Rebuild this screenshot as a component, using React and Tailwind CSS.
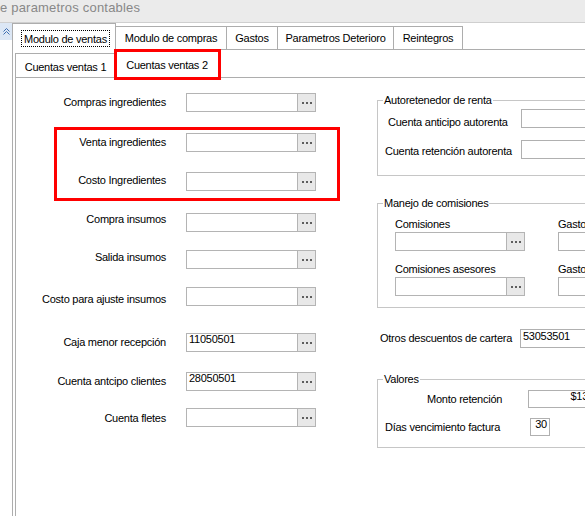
import React from "react";

function Dots() {
  return (
    <div className="flex items-center gap-[2px]">
      <span className="block h-[2px] w-[2px] bg-[#5e5e5e]" />
      <span className="block h-[2px] w-[2px] bg-[#5e5e5e]" />
      <span className="block h-[2px] w-[2px] bg-[#5e5e5e]" />
    </div>
  );
}

function LookupField({ value }) {
  return (
    <div className="flex h-[19px] w-[130px] shrink-0">
      <div className="w-[112px] border border-[#b4b4b4] bg-white pl-[2px] leading-[10px]">{value}</div>
      <div className="flex w-[18px] items-center justify-center border border-l-0 border-[#b4b4b4] bg-[#e8e8e8]">
        <Dots />
      </div>
    </div>
  );
}

const leftRows = [
  { label: "Compras ingredientes", mt: "mt-[15px]", lt: "mt-[3px]" },
  { label: "Venta ingredientes", mt: "mt-[21px]", lt: "mt-[3px]" },
  { label: "Costo Ingredientes", mt: "mt-[20px]", lt: "mt-[2px]" },
  { label: "Compra insumos", mt: "mt-[22px]", lt: "mt-0" },
  { label: "Salida insumos", mt: "mt-[18px]", lt: "mt-[1px]" },
  { label: "Costo para ajuste insumos", mt: "mt-[18px]", lt: "mt-[6px]" },
  { label: "Caja menor recepción", value: "11050501", mt: "mt-[27px]", lt: "mt-[3px]" },
  { label: "Cuenta antcipo clientes", value: "28050501", mt: "mt-[20px]", lt: "mt-[3px]" },
  { label: "Cuenta fletes", mt: "mt-[17px]", lt: "mt-[4px]" },
];

const outerTabs = [
  { label: "Modulo de compras", w: "w-[111px]" },
  { label: "Gastos", w: "w-[51px]" },
  { label: "Parametros Deterioro", w: "w-[116px]" },
  { label: "Reintegros", w: "w-[69px]" },
];

function PlainInput({ value, className }) {
  return (
    <div className={"shrink-0 border border-[#b0b0b0] bg-white px-[2px] " + className}>
      {value}
    </div>
  );
}

export default function App() {
  return (
    <div className="relative h-[516px] w-[585px] overflow-hidden bg-white font-['Liberation_Sans',Arial,sans-serif] text-[11px] leading-[13px] tracking-[-0.25px] text-black">
      {/* window caption */}
      <div className="h-[23px] border-b border-[#cfcfcf] bg-[#ebebeb] text-[13px] leading-[16px] tracking-[0.2px] text-[#888888]">
        e parametros contables
      </div>

      <div className="flex h-[493px]">
        {/* collapsed side panel */}
        <div className="w-[12px] shrink-0">
          <div className="flex h-[17px] items-start justify-center bg-[#dce7f5] pt-[5px]">
            <svg width="7" height="7" viewBox="0 0 7 7" fill="none" stroke="#3d6db0" strokeWidth="1">
              <path d="M0.5 3.5 L3.5 0.5 L6.5 3.5" />
              <path d="M0.5 6.5 L3.5 3.5 L6.5 6.5" />
            </svg>
          </div>
        </div>

        {/* outer tab control */}
        <div className="flex min-w-0 flex-1 flex-col">
          <div className="flex h-[27px] shrink-0 items-end">
            <div className="h-[27px] w-[104px] shrink-0 border-l border-r border-t border-[#adadad] bg-white">
              <div className="ml-[8px] mt-[6px] flex h-[17px] w-[89px] items-center justify-center border border-dotted border-black pt-[1px]">
                Modulo de ventas
              </div>
            </div>
            {outerTabs.map((t) => (
              <div
                key={t.label}
                className={"flex h-[24px] shrink-0 items-center justify-center border-b border-r border-t border-[#adadad] bg-white pt-[1px] " + t.w}
              >
                {t.label}
              </div>
            ))}
            <div className="h-[24px] flex-1 border-b border-[#adadad]" />
          </div>

          <div className="flex min-h-0 flex-1 flex-col border-l border-[#adadad] pl-[2px]">
            {/* inner tab control */}
            <div className="flex h-[28px] shrink-0 items-end">
              <div className="flex h-[25px] w-[100px] shrink-0 items-center justify-center border-b border-l border-t border-[#adadad] pt-[3px]">
                Cuentas ventas 1
              </div>
              <div className="flex h-[28px] w-[104px] shrink-0 items-center justify-center border-l border-r border-t border-[#adadad] bg-white pt-[2px]">
                Cuentas ventas 2
              </div>
              <div className="h-[25px] flex-1 border-b border-[#adadad]" />
            </div>

            <div className="flex min-h-0 flex-1 border-l border-[#adadad]">
              {/* account lookups */}
              <div className="flex w-[300px] shrink-0 flex-col">
                {leftRows.map((r) => (
                  <div key={r.label} className={"flex h-[19px] items-start " + r.mt}>
                    <span className={"w-[150px] shrink-0 text-right " + r.lt}>{r.label}</span>
                    <span className="w-[20px] shrink-0" />
                    <LookupField value={r.value} />
                  </div>
                ))}
              </div>

              {/* right side groups */}
              <div className="ml-[61px] flex w-[260px] shrink-0 flex-col">
                <fieldset className="mt-[16px] border border-[#c6c6c6] pb-[16px]">
                  <legend className="ml-[5px] px-[1px] leading-[13px]">Autoretenedor de renta</legend>
                  <div className="mt-[2px] flex h-[19px] items-start">
                    <span className="ml-[10px] mt-[7px] w-[133px] shrink-0">Cuenta anticipo autorenta</span>
                    <PlainInput className="h-[19px] w-[110px]" />
                  </div>
                  <div className="mt-[12px] flex h-[19px] items-start">
                    <span className="ml-[7px] mt-[5px] w-[136px] shrink-0">Cuenta retención autorenta</span>
                    <PlainInput className="h-[19px] w-[110px]" />
                  </div>
                </fieldset>

                <fieldset className="mt-[21px] border border-[#c6c6c6] pb-[11px]">
                  <legend className="ml-[5px] px-[1px] leading-[13px]">Manejo de comisiones</legend>
                  <div className="flex pl-[17px]">
                    <div className="flex w-[130px] shrink-0 flex-col">
                      <span className="mt-[8px]">Comisiones</span>
                      <div className="mt-[1px]">
                        <LookupField />
                      </div>
                      <span className="mt-[12px]">Comisiones asesores</span>
                      <div className="mt-[1px]">
                        <LookupField />
                      </div>
                    </div>
                    <div className="ml-[33px] flex w-[80px] shrink-0 flex-col">
                      <span className="mt-[8px] whitespace-nowrap">Gastos comisiones</span>
                      <PlainInput className="mt-[1px] h-[19px] w-[80px]" />
                      <span className="mt-[12px] whitespace-nowrap">Gastos comisiones asesores</span>
                      <PlainInput className="mt-[1px] h-[19px] w-[80px]" />
                    </div>
                  </div>
                </fieldset>

                <div className="mt-[21px] flex items-center">
                  <span className="ml-[3px] w-[140px] shrink-0">Otros descuentos de cartera</span>
                  <PlainInput className="h-[19px] w-[100px] leading-[13px]" value="53053501" />
                </div>

                <fieldset className="mt-[25px] border border-[#c6c6c6] pb-[11px]">
                  <legend className="ml-[5px] px-[1px] leading-[13px]">Valores</legend>
                  <div className="mt-[4px] flex items-center">
                    <span className="ml-[49px] w-[101px] shrink-0">Monto retención</span>
                    <PlainInput className="h-[18px] w-[64px] pr-[3px] text-right leading-[10px]" value="$13" />
                  </div>
                  <div className="mt-[10px] flex items-center">
                    <span className="ml-[7px] w-[145px] shrink-0">Días vencimiento factura</span>
                    <PlainInput className="h-[18px] w-[20px] text-right leading-[10px]" value="30" />
                  </div>
                </fieldset>
              </div>
            </div>
          </div>
        </div>
      </div>

      {/* highlight marks */}
      <div className="pointer-events-none absolute left-[114px] top-[49px] h-[31px] w-[107px] border-[3px] border-[#ff0000]" />
      <div className="pointer-events-none absolute left-[54px] top-[127px] h-[74px] w-[286px] border-[3px] border-[#ff0000]" />
    </div>
  );
}
